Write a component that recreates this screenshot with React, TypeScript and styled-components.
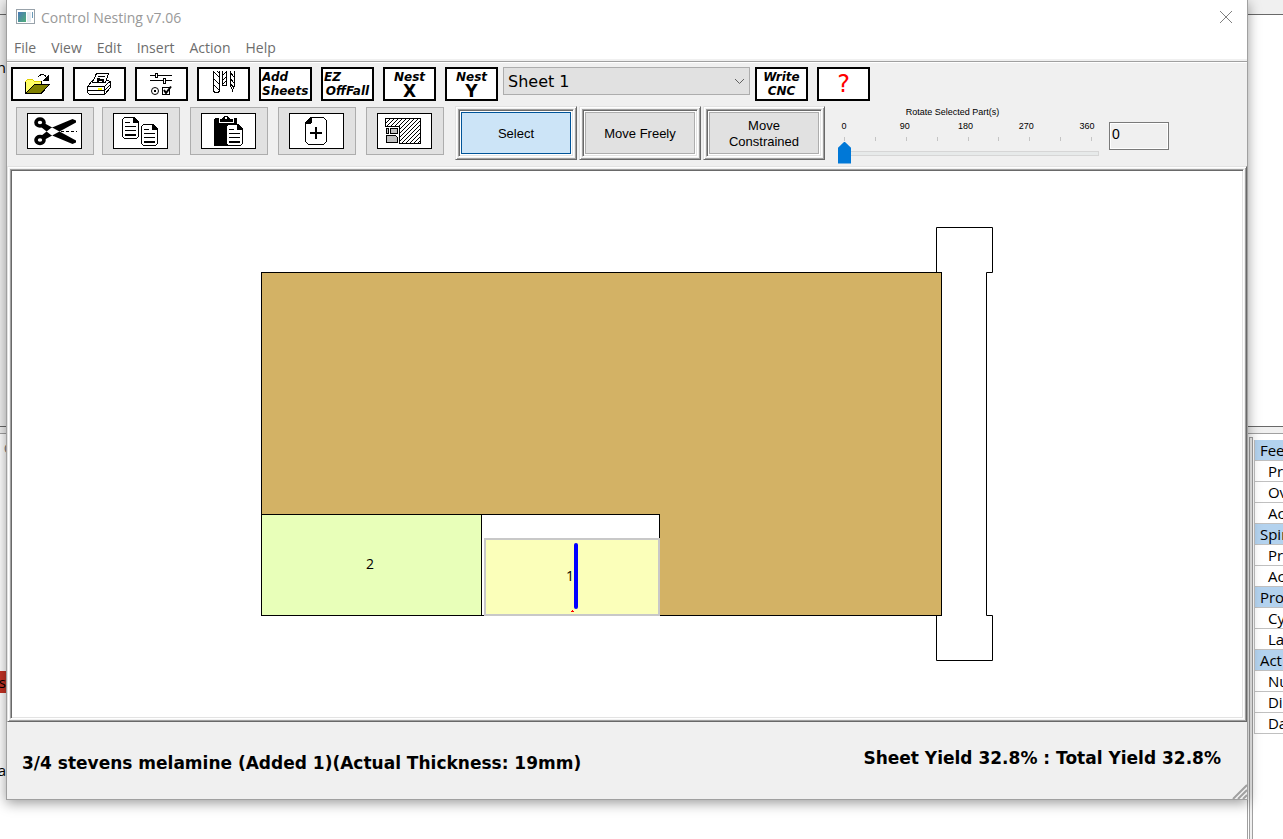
import React, { useState } from "react";
import styled, { createGlobalStyle, css } from "styled-components";

const UI_FONT = '"Open Sans", "Noto Sans", sans-serif';
const WIDE_FONT = '"DejaVu Sans", sans-serif';
const ARIAL_FONT = '"Liberation Sans", sans-serif';

const GlobalStyle = createGlobalStyle`
  *, *::before, *::after { box-sizing: border-box; }
  body { margin: 0; background: #ffffff; font-family: ${UI_FONT}; color: #000000; }
  button, input, select { font: inherit; color: inherit; margin: 0; padding: 0; border-radius: 0; }
  svg { display: block; }
`;

/* ---------- Application behind the dialog ---------- */

const Desktop = styled.div`
  position: relative;
  min-height: 100vh;
  overflow: hidden;
`;

const Behind = styled.div`
  position: absolute;
  inset: 0;
  display: flex;
  flex-direction: column;
  font-size: 15px;
  overflow: hidden;
`;

const BehindBar = styled.div`
  height: 15px;
  background: #f0f0f0;
  border-bottom: 1px solid #696969;
`;

const BehindTop = styled.div`
  display: flex;
  height: 412px;
  border-bottom: 1px solid #696969;
`;

const BehindSplit = styled.div`
  height: 7px;
  background: #f0f0f0;
  border-bottom: 1px solid #a0a0a0;
`;

const BehindBottom = styled.div`
  flex: 1;
  display: flex;
  justify-content: space-between;
  padding-top: 3px;
`;

const EdgePane = styled.div<{ $tone: string }>`
  display: flex;
  flex-direction: column;
  align-items: flex-end;
  width: 7px;
  overflow: hidden;
  background: ${(p) => p.$tone};
`;

const EdgeText = styled.span<{ $before: number; $alert?: boolean }>`
  margin-top: ${(p) => p.$before}px;
  padding: 0 1px 0 6px;
  line-height: 22px;
  font-size: 15px;
  background: ${(p) => (p.$alert ? "#c43325" : "transparent")};
`;

const EdgeLabel = styled.span`
  align-self: flex-start;
  padding-left: 4px;
  line-height: 24px;
  font-size: 12px;
  color: #6d6d6d;
`;

const SidePane = styled.aside`
  display: flex;
  width: 36px;
  padding-left: 1px;
  border-left: 1px solid #a0a0a0;
`;

const SideSplit = styled.div`
  width: 4px;
  background: #f0f0f0;
  border: solid #a0a0a0;
  border-width: 1px 1px 0 1px;
`;

const StatsTable = styled.table`
  width: 30px;
  margin: 3px 0 0 1px;
  align-self: flex-start;
  border-spacing: 0;
  table-layout: fixed;
  border-left: 1px solid #c0c0c0;
`;

const StatsCell = styled.td<{ $head?: boolean }>`
  height: 21px;
  padding: 0 0 0 ${(p) => (p.$head ? 5 : 13)}px;
  line-height: 20px;
  overflow: hidden;
  white-space: nowrap;
  border-bottom: 1px solid #c0c0c0;
  background: ${(p) => (p.$head ? "#b3d2ee" : "#ffffff")};
`;

/* ---------- Dialog ---------- */

const Dialog = styled.main`
  position: relative;
  display: flex;
  flex-direction: column;
  min-height: calc(100vh - 39px);
  margin: 0 35px 39px 6px;
  border: 1px solid #a0a0a0;
  border-top: 0;
  background: #f0f0f0;
  box-shadow: 0 3px 12px rgba(0, 0, 0, 0.4);
`;

const TitleBar = styled.header`
  display: flex;
  align-items: center;
  height: 34px;
  padding: 0 14px 0 9px;
  background: #ffffff;
`;

const Title = styled.h1`
  flex: 1;
  margin: 0 0 0 6px;
  font-size: 14px;
  font-weight: 400;
  color: #999999;
`;

const CloseButton = styled.button`
  width: 14px;
  height: 14px;
  border: 0;
  background: transparent;
`;

const MenuBar = styled.nav`
  display: flex;
  gap: 15px;
  height: 27px;
  padding: 3px 0 0 7px;
  background: #ffffff;
  border-bottom: 2px solid #f0f0f0;
`;

const MenuItem = styled.button`
  border: 0;
  background: transparent;
  font-size: 14px;
  line-height: 22px;
  color: #6d6d6d;
`;

const Toolbars = styled.section`
  display: flex;
  flex-direction: column;
  gap: 5px;
  padding: 4px 0 2px;
  border-top: 1px solid #a0a0a0;
  box-shadow: inset 0 1px #ffffff;
`;

const ToolRow = styled.div`
  display: flex;
  gap: 9px;
  height: 34px;
  padding-left: 4px;
  margin-top: 1px;
`;

const SheetGroup = styled.div`
  display: flex;
  gap: 5px;
`;

const ToolButton = styled.button`
  display: flex;
  flex-direction: column;
  align-items: center;
  justify-content: center;
  width: 53px;
  height: 34px;
  border: 2px solid #000000;
  background: #ffffff;
`;

const ToolText = styled.span<{ $left?: boolean; $upright?: boolean }>`
  align-self: ${(p) => (p.$left ? "flex-start" : "center")};
  padding-left: ${(p) => (p.$left ? 1 : 0)}px;
  font-family: ${WIDE_FONT};
  font-size: ${(p) => (p.$upright ? 17 : 12)}px;
  line-height: 14px;
  font-weight: 700;
  font-style: ${(p) => (p.$upright ? "normal" : "italic")};
  white-space: nowrap;
`;

const HelpMark = styled.span`
  font-family: ${WIDE_FONT};
  font-size: 24px;
  line-height: 28px;
  color: #ff0000;
`;

const SelectWrap = styled.div`
  display: grid;
  width: 247px;
  height: 28px;
  align-items: center;
  > * { grid-area: 1 / 1; }
  > svg { justify-self: end; margin-right: 5px; pointer-events: none; }
`;

const SheetSelect = styled.select`
  appearance: none;
  width: 100%;
  height: 28px;
  padding: 0 24px 0 4px;
  border: 1px solid #adadad;
  background: #e1e1e1;
  font-family: ${WIDE_FONT};
  font-size: 16px;
`;

const EditRow = styled.div`
  display: flex;
  gap: 11px;
  height: 58px;
  padding-left: 9px;
  align-items: flex-start;
`;

const EditGroup = styled.div`
  display: flex;
  gap: 10px;
  padding-top: 1px;
`;

const ClipGroup = styled.div`
  display: flex;
  gap: 8px;
`;

const EditButton = styled.button`
  display: flex;
  align-items: center;
  width: 78px;
  height: 48px;
  padding-left: 10px;
  border: 1px solid #adadad;
  background: #e1e1e1;
`;

const EditImage = styled.span`
  width: 55px;
  height: 36px;
  border: 1px solid #000000;
  background: #ffffff;
`;

const raised = css`
  border: 1px solid;
  border-color: #e3e3e3 #696969 #696969 #e3e3e3;
  box-shadow: inset 1px 1px #ffffff, inset -1px -1px #a0a0a0;
  padding: 2px;
`;

const Raised = styled.div<{ $grow?: boolean }>`
  ${raised}
  display: flex;
  flex: ${(p) => (p.$grow ? "1" : "none")};
`;

const Sunken = styled.div<{ $pad: number }>`
  display: flex;
  flex: 1;
  align-items: center;
  justify-content: center;
  border: 1px solid;
  border-color: #a0a0a0 #ffffff #ffffff #a0a0a0;
  box-shadow: inset 1px 1px #696969, inset -1px -1px #e3e3e3;
  padding: ${(p) => p.$pad}px;
  background: #ffffff;
`;

const ModeGroup = styled.div`
  display: flex;
  gap: 2px;
`;

const ModeButton = styled.button<{ $active: boolean }>`
  width: 110px;
  height: 42px;
  padding: 1px 10px 0;
  border: 1px solid ${(p) => (p.$active ? "#005499" : "#adadad")};
  background: ${(p) => (p.$active ? "#cce4f7" : "#e1e1e1")};
  font-family: ${ARIAL_FONT};
  font-size: 13px;
  line-height: 16px;
`;

const Rotation = styled.div`
  display: flex;
  gap: 10px;
  margin-left: 2px;
  font-family: ${ARIAL_FONT};
`;

const Dial = styled.div`
  display: flex;
  flex-direction: column;
  width: 261px;
`;

const DialLabel = styled.label`
  padding-right: 32px;
  text-align: center;
  font-size: 9px;
  line-height: 12px;
`;

const DialScale = styled.div`
  display: flex;
  justify-content: space-between;
  margin: 2px 4px 0 -2px;
  font-size: 9px;
  line-height: 12px;
  span { width: 16px; text-align: center; }
`;

const Ticks = styled.div`
  display: flex;
  justify-content: space-between;
  height: 4px;
  margin: 5px 7px 1px 6px;
  i { width: 1px; height: 4px; background: #c4c4c4; }
`;

const DialRange = styled.input`
  appearance: none;
  width: 100%;
  height: 22px;
  background: transparent;
  &::-webkit-slider-runnable-track {
    height: 5px;
    border: 1px solid #d6d6d6;
    background: #e7eaea;
  }
  &::-webkit-slider-thumb {
    appearance: none;
    width: 13px;
    height: 22px;
    margin: -10px 0 0 -1px;
    background: #0078d7;
    clip-path: polygon(50% 0, 100% 28%, 100% 100%, 0 100%, 0 28%);
  }
`;

const AngleInput = styled.input`
  width: 60px;
  height: 28px;
  margin-top: 16px;
  padding: 0 2px 5px;
  border: 1px solid #7a7a7a;
  box-shadow: inset 0 0 0 1px #ffffff;
  background: #f0f0f0;
  font-size: 14px;
`;

const StatusBar = styled.footer`
  display: flex;
  justify-content: space-between;
  height: 77px;
  padding: 0 26px 0 15px;
  font-family: ${WIDE_FONT};
  font-size: 17px;
  font-weight: 700;
  line-height: 20px;
`;

const StatusText = styled.p<{ $top: number }>`
  margin: ${(p) => p.$top}px 0 0;
  white-space: nowrap;
`;

const Grip = styled.svg`
  position: absolute;
  right: 0;
  bottom: 0;
`;

/* ---------- Icons ---------- */

const SmallIcon = ({ children }: { children: React.ReactNode }) => (
  <svg width="49" height="30" viewBox="0 0 49 30" fill="none" stroke="#000" shapeRendering="crispEdges">{children}</svg>
);

const LargeIcon = ({ children }: { children: React.ReactNode }) => (
  <svg width="53" height="34" viewBox="1 1 53 34" fill="none" stroke="#000" shapeRendering="crispEdges">{children}</svg>
);

const OpenIcon = () => (
  <SmallIcon>
    <path d="M12.5 24.5V12.5L14.5 10.5H19.5L21.5 12.5H28.5V15.5H21.5L12.5 24.5Z" fill="#ffff66" stroke="#e0d000" />
    <path d="M12.5 25V13M28.5 12V15" />
    <path d="M21.5 15.5H36.5L28 24.5H12.5Z" fill="#808000" />
    <path d="M24.5 8.5L26.5 6.5L28.5 5.5H30.5L32.5 7L33.5 9" />
    <path d="M35.5 6V11.5H30Z" fill="#000" stroke="none" />
  </SmallIcon>
);

const PrintIcon = () => (
  <SmallIcon>
    <path d="M12.5 17.5L17.5 11.5H33.5L35.5 13.5V18.5L29.5 25.5H14.5L12.5 23.5Z" fill="#fff" />
    <path d="M17.5 13.5L21.5 4.5H33.5L30.5 13.5Z" fill="#fff" />
    <path d="M23 7.5H30M22 9.5H25M19 13.5H29" />
    <path d="M22.5 13V10.5H27.5V13" strokeWidth="2" />
    <path d="M12.5 17.5H29.5L35.5 12M29.5 17.5V25M12.5 21.5H29M30 21L35.5 15.5" />
    <path d="M23 19H27V21H23Z" fill="#ffff00" stroke="none" />
  </SmallIcon>
);

const OptionsIcon = () => (
  <SmallIcon>
    <path d="M13 6.5H35M13 11.5H35" />
    <path d="M18.5 4.5H20.5V8.5H18.5ZM26.5 9.5H28.5V14.5H26.5Z" fill="#fff" />
    <circle cx="18" cy="22" r="3.5" shapeRendering="auto" />
    <circle cx="18" cy="22" r="1.5" fill="#000" stroke="none" />
    <path d="M25.5 18.5H32.5V25.5H25.5Z" />
    <path d="M27 21L29 24L34 17.5" strokeWidth="2" shapeRendering="auto" />
  </SmallIcon>
);

const ToolsIcon = () => (
  <SmallIcon>
    <path d="M14.5 2V20.5Q14.5 23.5 17.5 23.5Q20.5 23.5 20.5 20.5V2" />
    <path d="M15 3L20 8M15 10L20 15M15 16L20 21M20 4L18 2" />
    <path d="M23.5 2V16.5H27.5V2M27 3L24 6M27 8L24 11M27 12L24 15" />
    <path d="M31.5 2V17L33.5 21.5L35.5 17V2M31 3L35 8M31 9L35 14M31 15L35 18" />
  </SmallIcon>
);

const CutIcon = () => (
  <LargeIcon>
    <g shapeRendering="auto">
      <ellipse cx="13" cy="9.5" rx="4" ry="3.5" strokeWidth="3.6" />
      <ellipse cx="13" cy="27" rx="4" ry="3.5" strokeWidth="3.6" />
      <path d="M17 10L27 15.5L49 27.5V29.5L45.5 31L24 22L14 14ZM17 27L27 21.5L49 9.5V7.5L45.5 6L24 15L14 23Z" fill="#000" stroke="none" />
      <circle cx="26.5" cy="18.5" r="1" fill="#fff" stroke="none" />
    </g>
    <path d="M34 18.5H50" strokeDasharray="3 2" />
  </LargeIcon>
);

const Page = ({ x, y }: { x: number; y: number }) => (
  <g transform={`translate(${x} ${y})`}>
    <path d="M2.5 .5H12L16.5 5V19.5L14.5 21.5H2.5L.5 19.5V2.5Z" fill="#fff" />
    <path d="M11 0L17 6H11Z" fill="#000" stroke="none" />
    <path d="M3 5.5H8M3 9.5H14M3 13.5H14" />
    <path d="M3 18H14" strokeWidth="2" />
  </g>
);

const CopyIcon = () => (
  <LargeIcon><Page x={9} y={4} /><Page x={28} y={11} /></LargeIcon>
);

const PasteIcon = () => (
  <LargeIcon>
    <rect x="13" y="5" width="23" height="28" rx="2" fill="#000" stroke="none" />
    <path d="M18 5H21L23 2H27L29 5H32V9H18Z" fill="#000" stroke="#fff" />
    <path d="M24 4H26V6H24Z" fill="#fff" stroke="none" />
    <Page x={25} y={11} />
  </LargeIcon>
);

const AddPageIcon = () => (
  <LargeIcon>
    <path d="M22 4.5H34.5L37.5 7.5V28.5L34.5 31.5H19.5L16.5 28.5V10Z" />
    <path d="M16 11L23 4V9L21 11Z" fill="#000" stroke="none" />
    <path d="M21 20H33M27 14V26" strokeWidth="2" />
  </LargeIcon>
);

const NestIcon = () => (
  <LargeIcon>
    <defs>
      <clipPath id="nest-area"><path d="M8 5H44V31H22V13H8Z" /></clipPath>
    </defs>
    <g clipPath="url(#nest-area)">
      {Array.from({ length: 16 }, (_, i) => (
        <path key={i} d={`M${i * 4 + 6} 5L${i * 4 - 20} 31`} />
      ))}
    </g>
    <path d="M8.5 5.5H43.5V30.5H22.5V13.5H8.5Z" />
    <path d="M9.5 15.5H11.5V20.5H9.5ZM13.5 15.5H20.5V20.5H13.5ZM9.5 22.5H18.5L20.5 24.5V29.5H9.5Z" fill="#c0c0c0" />
  </LargeIcon>
);

const AppIcon = () => (
  <svg width="19" height="16" viewBox="0 0 19 16">
    <defs>
      <linearGradient id="app-pane" x1="0" y1="0" x2="1" y2="1">
        <stop offset="0" stopColor="#4a78b8" /><stop offset="1" stopColor="#4fae78" />
      </linearGradient>
    </defs>
    <rect x=".5" y=".5" width="18" height="14" fill="#fff" stroke="#98a2aa" />
    <rect x="2" y="3" width="8" height="10" fill="url(#app-pane)" />
    <rect x="11" y="3" width="4" height="10" fill="#e4eaf0" />
    <rect x="16" y="3" width="1" height="6" fill="#6a9ab8" />
  </svg>
);

/* ---------- Nesting view ---------- */

const NestingView = () => (
  <svg width="732" height="434" viewBox="0 0 732 434" overflow="visible" stroke="#000" fill="none" role="img" aria-label="Nested sheet">
    <path d="M675.5 45.5V.5H731.5V45.5H725.5V388.5H731.5V433.5H675.5V388.5" />
    <rect x=".5" y="45.5" width="680" height="343" fill="#d3b265" />
    <rect x="220.5" y="287.5" width="178" height="101" fill="#fff" />
    <rect x=".5" y="287.5" width="220" height="101" fill="#e8ffb9" />
    <rect x="224" y="312" width="174" height="76" fill="#fbffba" stroke="#c8c8c8" strokeWidth="2" />
    <g fill="#000" stroke="none" fontFamily={UI_FONT} fontSize="14">
      <text x="105" y="342">2</text>
      <text x="305" y="354">1</text>
    </g>
    <path d="M315 318V380" stroke="#0000ff" strokeWidth="4" strokeLinecap="round" />
    <path d="M310 384.5H313M311.5 383V385" stroke="#ff0000" />
  </svg>
);

/* ---------- Data ---------- */

const menus = ["File", "View", "Edit", "Insert", "Action", "Help"];
const modes = ["Select", "Move Freely", "Move Constrained"];
const stats: { label: string; head?: boolean }[] = [
  { label: "Fee", head: true }, { label: "Pro" }, { label: "Ov" }, { label: "Act" },
  { label: "Spin", head: true }, { label: "Pro" }, { label: "Act" },
  { label: "Pro", head: true }, { label: "Cy" }, { label: "La" },
  { label: "Act", head: true }, { label: "Nu" }, { label: "Di" }, { label: "Da" },
];

export default function App() {
  const [mode, setMode] = useState("Select");
  const [angle, setAngle] = useState("0");

  return (
    <Desktop>
      <GlobalStyle />
      <Behind>
        <BehindBar />
        <BehindTop>
          <EdgePane $tone="#f0f0f0"><EdgeText $before={41}>n</EdgeText></EdgePane>
        </BehindTop>
        <BehindSplit />
        <BehindBottom>
          <EdgePane $tone="#ffffff">
            <EdgeLabel>C</EdgeLabel>
            <EdgeText $before={210} $alert>s</EdgeText>
            <EdgeText $before={66}>a</EdgeText>
          </EdgePane>
          <SidePane>
            <SideSplit />
            <StatsTable>
              <tbody>
                {stats.map((row, i) => (
                  <tr key={i}><StatsCell $head={row.head}>{row.label}</StatsCell></tr>
                ))}
              </tbody>
            </StatsTable>
          </SidePane>
        </BehindBottom>
      </Behind>

      <Dialog>
        <TitleBar>
          <AppIcon />
          <Title>Control Nesting v7.06</Title>
          <CloseButton aria-label="Close">
            <svg width="14" height="14" viewBox="0 0 14 14" stroke="#808080"><path d="M1 1L13 13M13 1L1 13" /></svg>
          </CloseButton>
        </TitleBar>
        <MenuBar>
          {menus.map((m) => <MenuItem key={m}>{m}</MenuItem>)}
        </MenuBar>

        <Toolbars>
          <ToolRow>
            <ToolButton aria-label="Open"><OpenIcon /></ToolButton>
            <ToolButton aria-label="Print"><PrintIcon /></ToolButton>
            <ToolButton aria-label="Options"><OptionsIcon /></ToolButton>
            <ToolButton aria-label="Tools"><ToolsIcon /></ToolButton>
            <ToolButton><ToolText $left>Add</ToolText><ToolText $left>Sheets</ToolText></ToolButton>
            <ToolButton><ToolText $left>EZ</ToolText><ToolText>OffFall</ToolText></ToolButton>
            <ToolButton><ToolText>Nest</ToolText><ToolText $upright>X</ToolText></ToolButton>
            <SheetGroup>
              <ToolButton><ToolText>Nest</ToolText><ToolText $upright>Y</ToolText></ToolButton>
              <SelectWrap>
                <SheetSelect aria-label="Sheet"><option>Sheet 1</option></SheetSelect>
                <svg width="11" height="7" viewBox="0 0 11 7" fill="none" stroke="#606060"><path d="M1 1L5.5 5.5L10 1" /></svg>
              </SelectWrap>
              <ToolButton><ToolText>Write</ToolText><ToolText>CNC</ToolText></ToolButton>
            </SheetGroup>
            <ToolButton aria-label="Help"><HelpMark>?</HelpMark></ToolButton>
          </ToolRow>

          <EditRow>
            <EditGroup>
              <ClipGroup>
                <EditButton aria-label="Cut"><EditImage><CutIcon /></EditImage></EditButton>
                <EditButton aria-label="Copy"><EditImage><CopyIcon /></EditImage></EditButton>
              </ClipGroup>
              <EditButton aria-label="Paste"><EditImage><PasteIcon /></EditImage></EditButton>
              <EditButton aria-label="Add part"><EditImage><AddPageIcon /></EditImage></EditButton>
              <EditButton aria-label="Nest parts"><EditImage><NestIcon /></EditImage></EditButton>
            </EditGroup>
            <ModeGroup>
              {modes.map((m) => (
                <Raised key={m}>
                  <Sunken $pad={2}>
                    <ModeButton $active={m === mode} onClick={() => setMode(m)}>{m}</ModeButton>
                  </Sunken>
                </Raised>
              ))}
            </ModeGroup>
            <Rotation>
              <Dial>
                <DialLabel htmlFor="rotation">Rotate Selected Part(s)</DialLabel>
                <DialScale>
                  {[0, 90, 180, 270, 360].map((d) => <span key={d}>{d}</span>)}
                </DialScale>
                <Ticks>{Array.from({ length: 9 }, (_, i) => <i key={i} />)}</Ticks>
                <DialRange id="rotation" type="range" min="0" max="360" value={angle} onChange={(e) => setAngle(e.target.value)} />
              </Dial>
              <AngleInput aria-label="Rotation angle" value={angle} onChange={(e) => setAngle(e.target.value)} />
            </Rotation>
          </EditRow>
        </Toolbars>

        <Raised $grow>
          <Sunken $pad={1}><NestingView /></Sunken>
        </Raised>

        <StatusBar>
          <StatusText $top={31}>3/4 stevens melamine (Added 1)(Actual Thickness: 19mm)</StatusText>
          <StatusText $top={26}>Sheet Yield 32.8% : Total Yield 32.8%</StatusText>
        </StatusBar>
        <Grip width="15" height="15" viewBox="0 0 15 15" stroke="#a0a0a0" strokeWidth="2">
          <path d="M1 15L15 1M6 15L15 6M11 15L15 11" />
        </Grip>
      </Dialog>
    </Desktop>
  );
}
